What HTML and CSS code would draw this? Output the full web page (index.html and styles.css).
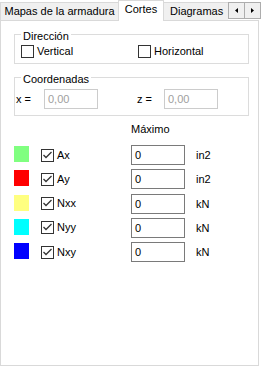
FILE: index.html
```html
<!DOCTYPE html>
<html lang="es">
<head>
    <meta charset="UTF-8">
    <title>Cortes</title>
    <link rel="stylesheet" href="styles.css">
</head>
<body>

<div class="tabs">
    <div class="tab-list">
        <div class="tab first">Mapas de la armadura</div>
        <div class="tab active">Cortes</div>
        <div class="tab last">Diagramas</div>
    </div>
    <div class="scroller">
        <span class="scroll-btn">
            <svg width="3" height="5" viewBox="0 0 3 5"><polygon points="3,0 3,5 0,2.5" fill="#000"/></svg>
        </span>
        <span class="scroll-btn">
            <svg width="3" height="5" viewBox="0 0 3 5"><polygon points="0,0 0,5 3,2.5" fill="#000"/></svg>
        </span>
    </div>
</div>

<div class="panel">
    <div class="group dir">
        <div class="legend">Dirección</div>
        <div class="group-row">
            <label class="check wide"><span class="box"></span>Vertical</label>
            <label class="check"><span class="box"></span>Horizontal</label>
        </div>
    </div>

    <div class="group coord">
        <div class="legend">Coordenadas</div>
        <div class="group-row">
            <span class="coord-label">x =</span>
            <span class="field disabled">0,00</span>
            <span class="coord-label z">z =</span>
            <span class="field disabled">0,00</span>
        </div>
    </div>

    <div class="max-head">Máximo</div>

    <div class="rows">
        <div class="row">
            <span class="swatch sw-ax"></span>
            <label class="check item"><span class="box on"><svg width="11" height="11" viewBox="0 0 11 11"><polyline points="1.5,5 4,7.5 9.5,2" fill="none" stroke="#333" stroke-width="1.3"/></svg></span>Ax</label>
            <span class="field">0</span>
            <span class="unit">in2</span>
        </div>
        <div class="row">
            <span class="swatch sw-ay"></span>
            <label class="check item"><span class="box on"><svg width="11" height="11" viewBox="0 0 11 11"><polyline points="1.5,5 4,7.5 9.5,2" fill="none" stroke="#333" stroke-width="1.3"/></svg></span>Ay</label>
            <span class="field">0</span>
            <span class="unit">in2</span>
        </div>
        <div class="row">
            <span class="swatch sw-nxx"></span>
            <label class="check item"><span class="box on"><svg width="11" height="11" viewBox="0 0 11 11"><polyline points="1.5,5 4,7.5 9.5,2" fill="none" stroke="#333" stroke-width="1.3"/></svg></span>Nxx</label>
            <span class="field">0</span>
            <span class="unit">kN</span>
        </div>
        <div class="row">
            <span class="swatch sw-nyy"></span>
            <label class="check item"><span class="box on"><svg width="11" height="11" viewBox="0 0 11 11"><polyline points="1.5,5 4,7.5 9.5,2" fill="none" stroke="#333" stroke-width="1.3"/></svg></span>Nyy</label>
            <span class="field">0</span>
            <span class="unit">kN</span>
        </div>
        <div class="row">
            <span class="swatch sw-nxy"></span>
            <label class="check item"><span class="box on"><svg width="11" height="11" viewBox="0 0 11 11"><polyline points="1.5,5 4,7.5 9.5,2" fill="none" stroke="#333" stroke-width="1.3"/></svg></span>Nxy</label>
            <span class="field">0</span>
            <span class="unit">kN</span>
        </div>
    </div>
</div>

</body>
</html>
```

FILE: styles.css
```css
* {
    box-sizing: border-box;
}

body {
    margin: 0;
    width: 261px;
    height: 367px;
    overflow: hidden;
    background-color: #fff;
    font-family: "Liberation Sans", Arial, sans-serif;
    font-size: 11px;
    color: #000;
}

/* tab strip */
.tabs {
    display: flex;
    height: 21px;
    margin-bottom: -1px;
    position: relative;
    z-index: 1;
}

.tab-list {
    display: flex;
    align-items: flex-end;
    width: 228px;
    overflow: hidden;
}

.tab {
    flex-shrink: 0;
    height: 18px;
    margin-bottom: 1px;
    border: 1px solid #d9d9d9;
    border-bottom: none;
    background-color: #f0f0f0;
    line-height: 16px;
    text-align: center;
    white-space: nowrap;
}

.tab.first {
    width: 119px;
}

.tab.active {
    width: 46px;
    height: 21px;
    margin-left: -1px;
    margin-bottom: 0;
    background-color: #fff;
}

.tab.last {
    width: 70px;
    margin-left: -1px;
    padding-left: 6px;
    text-align: left;
}

.scroller {
    display: flex;
    margin-top: 2px;
    height: 17px;
}

.scroll-btn {
    display: flex;
    align-items: center;
    justify-content: center;
    width: 17px;
    height: 17px;
    border: 1px solid #adadad;
    background-color: #f0f0f0;
}

.scroll-btn + .scroll-btn {
    margin-left: -1px;
}

/* page */
.panel {
    width: 259px;
    height: 346px;
    border: 1px solid #d9d9d9;
    padding-top: 13px;
}

.group {
    margin: 0 9px 0 13px;
    border: 1px solid #dcdcdc;
}

.group.coord {
    margin-top: 13px;
}

.legend {
    display: table;
    margin: -6px 0 0 6px;
    padding: 0 2px;
    line-height: 14px;
    background-color: #fff;
}

.group-row {
    display: flex;
    align-items: center;
}

.dir .group-row {
    margin-top: 2px;
    padding: 0 0 5px 6px;
}

.coord .group-row {
    margin-top: 3px;
    padding: 0 0 6px 1px;
}

.check {
    display: flex;
    align-items: center;
    line-height: 13px;
}

.check.wide {
    width: 117px;
}

.box {
    display: flex;
    align-items: center;
    justify-content: center;
    width: 13px;
    height: 13px;
    margin-right: 3px;
    border: 1px solid #333;
    background-color: #fff;
}

.coord-label {
    width: 28px;
}

.coord-label.z {
    width: 27px;
    margin-left: 39px;
}

.field {
    width: 54px;
    height: 20px;
    padding-left: 3px;
    border: 1px solid #7a7a7a;
    background-color: #fff;
    line-height: 18px;
}

.field.disabled {
    border-color: #cccccc;
    color: #a0a0a0;
}

.max-head {
    margin-top: 6px;
    padding-left: 130px;
    line-height: 14px;
}

.rows {
    display: flex;
    flex-direction: column;
    gap: 4.25px;
    margin-top: 9px;
    padding-left: 13px;
}

.row {
    display: flex;
    align-items: center;
    height: 20px;
}

.swatch {
    align-self: flex-start;
    width: 15px;
    height: 16px;
    margin-top: 1px;
}

.sw-ax { background-color: #80ff80; }
.sw-ay { background-color: #ff0000; }
.sw-nxx { background-color: #ffff80; }
.sw-nyy { background-color: #00ffff; }
.sw-nxy { background-color: #0000ff; }

.check.item {
    width: 90px;
    margin-left: 12px;
}

.unit {
    margin-left: 11px;
}
```
